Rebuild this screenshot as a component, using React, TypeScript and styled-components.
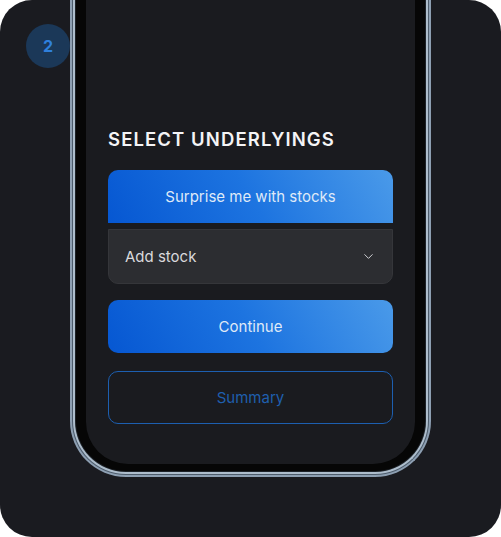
import React from 'react';
import styled, { createGlobalStyle } from 'styled-components';
import { ChevronDown } from 'lucide-react';

const GlobalStyle = createGlobalStyle`
  html, body {
    margin: 0;
    padding: 0;
    background: #ffffff;
  }
  body {
    font-family: Inter, "Noto Sans", sans-serif;
  }
`;

const Card = styled.div`
  position: relative;
  width: 501px;
  height: 537px;
  border-radius: 32px;
  background: #1a1b20;
  overflow: hidden;
  display: flex;
  justify-content: center;
  align-items: flex-end;
  padding-bottom: 60px;
  box-sizing: border-box;
`;

const StepBadge = styled.div`
  position: absolute;
  left: 26px;
  top: 24px;
  width: 44px;
  height: 44px;
  border-radius: 50%;
  background: #1b3858;
  color: #2f80dc;
  font-weight: 700;
  font-size: 16px;
  display: flex;
  align-items: center;
  justify-content: center;
  z-index: 2;
`;

const PhoneFrame = styled.div`
  width: 361px;
  height: 530px;
  box-sizing: border-box;
  border: 2px solid #8d9fb2;
  border-top: none;
  border-radius: 0 0 56px 56px;
  background: #4d5c6c;
  padding: 0 1px 1px;
  display: flex;
`;

const PhoneRim = styled.div`
  flex: 1;
  display: flex;
  border: 2px solid #adbdcc;
  border-top: none;
  border-radius: 0 0 53px 53px;
  background: #060606;
  padding: 0 11px 8px;
  box-shadow: inset 0 0 0 1px #1c2127;
`;

const Screen = styled.div`
  flex: 1;
  border-radius: 0 0 42px 42px;
  background: #1a1b1f;
  display: flex;
  flex-direction: column;
  justify-content: flex-end;
  padding: 0 22px 40px;
`;

const Title = styled.h2`
  margin: 0 0 20px;
  color: #f4f4f6;
  font-size: 18.5px;
  font-weight: 600;
  letter-spacing: 1.1px;
`;

const Button = styled.button<{ $variant: 'primary' | 'outline'; $attached?: boolean }>`
  display: flex;
  align-items: center;
  justify-content: center;
  width: 100%;
  height: 53px;
  font-family: inherit;
  font-size: 15px;
  font-weight: 400;
  cursor: pointer;
  border-radius: ${p => (p.$attached ? '10px 10px 0 0' : '10px')};
  color: ${p => (p.$variant === 'primary' ? '#dfe9f7' : '#1f5fae')};
  background: ${p =>
    p.$variant === 'primary'
      ? 'linear-gradient(60deg, #0657d2 0%, #1d74e0 50%, #4a9ae9 100%)'
      : 'transparent'};
  border: ${p => (p.$variant === 'primary' ? 'none' : '1px solid #1d5fb0')};
`;

const Select = styled.div`
  display: flex;
  align-items: center;
  justify-content: space-between;
  height: 55px;
  margin-top: 6px;
  padding: 0 16px;
  box-sizing: border-box;
  border-radius: 0 0 10px 10px;
  background: #2c2d31;
  border: 1px solid #35363a;
  color: #d9d9dc;
  font-size: 15px;
`;

const Stack = styled.div<{ $gap: number }>`
  display: flex;
  flex-direction: column;
  margin-top: ${p => p.$gap}px;
`;

export default function App() {
  return (
    <>
      <GlobalStyle />
      <Card>
        <StepBadge>2</StepBadge>
        <PhoneFrame>
          <PhoneRim>
            <Screen>
              <Title>SELECT UNDERLYINGS</Title>
              <Button $variant="primary" $attached>Surprise me with stocks</Button>
              <Select>
                <span>Add stock</span>
                <ChevronDown size={15} strokeWidth={1.6} color="#cfd0d4" />
              </Select>
              <Stack $gap={16}>
                <Button $variant="primary">Continue</Button>
              </Stack>
              <Stack $gap={18}>
                <Button $variant="outline">Summary</Button>
              </Stack>
            </Screen>
          </PhoneRim>
        </PhoneFrame>
      </Card>
    </>
  );
}
